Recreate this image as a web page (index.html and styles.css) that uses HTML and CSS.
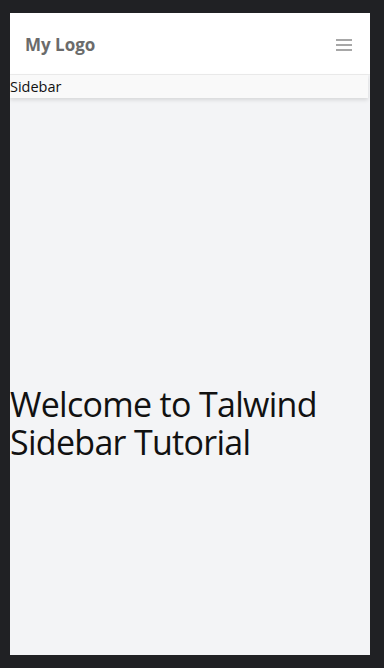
FILE: index.html
```html
<!DOCTYPE html>
<html lang="en">
<head>
<meta charset="utf-8">
<title>Talwind Sidebar Tutorial</title>
<link rel="stylesheet" href="styles.css">
</head>
<body>
<div class="frame">
  <header class="topbar">
    <span class="logo">My Logo</span>
    <button class="menu" aria-label="Menu">
      <svg width="18" height="14" viewBox="0 0 18 14"><path d="M1 2h16M1 7h16M1 12h16" stroke="#8a8a8a" stroke-width="1.6" fill="none"/></svg>
    </button>
  </header>
  <nav class="sidebar">Sidebar</nav>
  <main class="content">
    <h1 class="title">Welcome to Talwind Sidebar Tutorial</h1>
  </main>
</div>
</body>
</html>
```
FILE: styles.css
```css
html, body {
  margin: 0;
  padding: 0;
  background: #202124;
}
body {
  font-family: "Open Sans", "Noto Sans", sans-serif;
}
.frame {
  margin: 13px 0 0 10px;
  width: 360px;
  height: 642px;
  background: #f3f4f6;
  display: flex;
  flex-direction: column;
  overflow: hidden;
}
.topbar {
  height: 62px;
  flex: none;
  background: #fff;
  border-bottom: 1px solid #ececec;
  box-sizing: border-box;
  display: flex;
  align-items: center;
  justify-content: space-between;
  padding: 2px 17px 0 15px;
}
.logo {
  font-weight: 700;
  font-size: 17px;
  color: #6b6b6b;
}
.menu {
  border: 0;
  background: none;
  padding: 0;
  display: flex;
}
.sidebar {
  flex: none;
  width: 358px;
  height: 23px;
  line-height: 23px;
  font-size: 14.5px;
  color: #111;
  background: #f9f9f9;
  box-shadow: 0 2px 4px rgba(0,0,0,0.12);
}
.content {
  flex: 1;
  padding-top: 287px;
}
.title {
  margin: 0;
  font-weight: 400;
  font-size: 34px;
  letter-spacing: -0.7px;
  line-height: 38px;
  color: #111;
}
```
